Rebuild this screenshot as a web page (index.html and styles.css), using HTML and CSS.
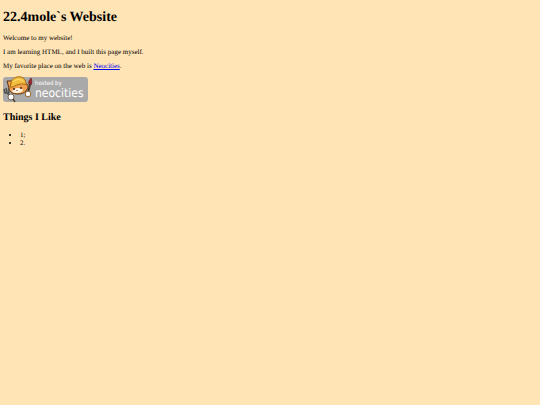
FILE: index.html
```html
<!DOCTYPE html>
<html lang="en">
<head>
  <meta charset="UTF-8">
  <meta name="viewport" content="width=device-width, initial-scale=1.0">
  <title>22.4mole`s Website</title>
  <link rel="stylesheet" href="styles.css">
</head>
<body>
  <h1>22.4mole`s Website</h1>

  <p>Welcome to my website!</p>

  <p>I am learning HTML, and I built this page myself.</p>

  <p>My favorite place on the web is <a href="https://neocities.org">Neocities</a>.</p>

  <p>
    <a href="https://neocities.org" aria-label="Hosted by Neocities">
      <svg class="badge" viewBox="0 0 85 27" role="img">
        <rect x="0" y="1" width="85" height="25" rx="3" fill="#a9a9a9"/>
        <!-- fork -->
        <path d="M1 13l1 4 3 0M3 12l1 4M6 12l0 4-1 2 3 4" fill="none" stroke="#4d4d4a" stroke-width="1.5"/>
        <!-- paint brush -->
        <path d="M25 17l2-9" stroke="#4a3a30" stroke-width="2"/>
        <path d="M26 8c-1-3 1-4 2-6 1 2 1 5 0 7z" fill="#a8252b" stroke="#5c2522" stroke-width=".8"/>
        <!-- cat -->
        <path d="M6 12L4 5l5 0 11 0 5 4 0 3-2 3c-2 2-4 3-8 3-5 0-9-2-9-6z" fill="#f0a04c" stroke="#5a3419" stroke-width="1"/>
        <path d="M9 15c1-2 3-2 5-3 2 0 5 0 6 2-1 2-3 3-6 3-2 0-4 0-5-2z" fill="#fff0df"/>
        <path d="M8 8c0-4 2-6 6-7 5-1 8 1 9 6l1 2c-5-2-9-1-14 2l-3 0z" fill="#f2bd3c" stroke="#a46a18" stroke-width="1"/>
        <path d="M10 6c3-3 7-3 10-1" fill="none" stroke="#ffe27c" stroke-width="1"/>
        <circle cx="11" cy="13" r="1" fill="#3b291f"/>
        <circle cx="18" cy="12" r="1" fill="#3b291f"/>
        <path d="M13 14h2l-1 1z" fill="#713b2c"/>
        <!-- paws -->
        <circle cx="8" cy="21" r="3" fill="#fff" stroke="#776252" stroke-width="1"/>
        <path d="M10 23l2 3" stroke="#55432f" stroke-width="1.5"/>
        <circle cx="25" cy="18" r="2.8" fill="#fff" stroke="#9b672f" stroke-width="1"/>
        <text class="badge-small" x="32" y="9">hosted by</text>
        <text class="badge-name" x="32" y="21">neocities</text>
      </svg>
    </a>
  </p>

  <h2>Things I Like</h2>

  <ul>
    <li>1;</li>
    <li>2.</li>
  </ul>
</body>
</html>
```
FILE: styles.css
```css
body {
  margin: 10px 3px;
  background: #ffe4b5;
  color: black;
  font-family: "Liberation Serif", "Times New Roman", serif;
  font-size: 7px;
  line-height: 8px;
  text-rendering: geometricPrecision;
}
h1 {
  margin: 0 0 8px;
  font-size: 14px;
  line-height: 16px;
}
h2 {
  margin: 9px 0 7px;
  font-size: 10px;
  line-height: 12px;
}
p {
  margin: 6px 0;
}
a {
  color: #0000ee;
}
ul {
  margin: 0;
  padding-left: 17px;
}
.badge {
  display: block;
  width: 85px;
  height: 27px;
}
.badge text {
  fill: white;
  font-family: "DejaVu Sans Condensed", "DejaVu Sans", sans-serif;
}
.badge-small {
  font-size: 6px;
}
.badge-name {
  font-size: 12px;
}
```
